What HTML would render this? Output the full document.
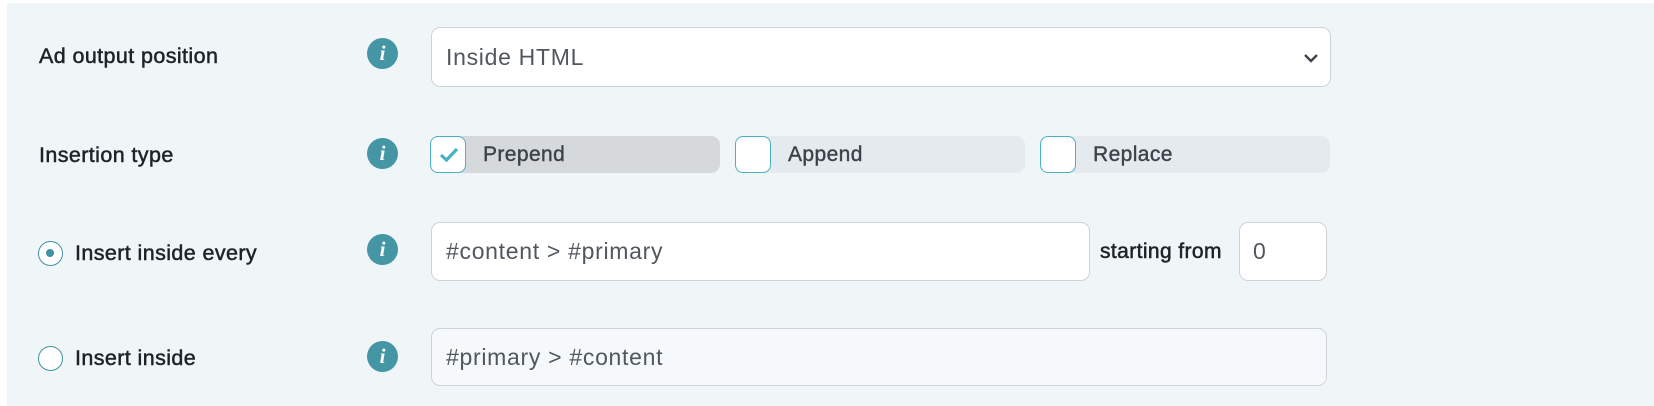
<!DOCTYPE html>
<html><head><meta charset="utf-8"><style>
*{box-sizing:border-box;margin:0;padding:0}
body{width:1654px;height:406px;background:#fff;font-family:"Liberation Sans",sans-serif;position:relative;overflow:hidden}
.panel{position:absolute;left:7px;top:3px;right:0;bottom:0;background:#f0f5f8}
.abs{position:absolute}
.lbl{position:absolute;font-size:21.5px;letter-spacing:0.4px;color:#1d2327;line-height:24px;-webkit-text-stroke:0.5px #1d2327;white-space:nowrap}
.info{position:absolute;width:31px;height:31px;border-radius:50%;background:#4496a4;color:#fff;font-family:"Liberation Serif",serif;font-style:italic;font-weight:bold;font-size:21px;line-height:31px;text-align:center}
.box{position:absolute;background:#fff;border:1px solid #cdd3d9;border-radius:9px;font-size:23px;letter-spacing:0.7px;color:#50575e;padding-left:14px;display:flex;align-items:center;white-space:nowrap}
.pill{position:absolute;top:136px;height:37px;width:290px;border-radius:9px;background:#e5eaee}
.pill .cb{position:absolute;left:0;top:0;width:36px;height:37px;background:#fff;border:1px solid #4ab0c4;border-radius:8px}
.pill span{position:absolute;left:53px;top:0;line-height:37px;font-size:21px;letter-spacing:0.4px;color:#3c434a;-webkit-text-stroke:0.4px #3c434a}
.radio{position:absolute;width:25px;height:25px;border-radius:50%;border:1.5px solid #3f93a3;background:#fff}
</style></head><body>
<div class="panel"></div>

<div class="lbl" style="left:39px;top:44px">Ad output position</div>
<div class="info" style="left:367px;top:38px">i</div>
<div class="box" style="left:431px;top:27px;width:900px;height:60px">Inside HTML
<svg class="abs" style="left:871px;top:24px" width="16" height="12" viewBox="0 0 16 12"><path d="M2 3 L8 9 L14 3" fill="none" stroke="#3c434a" stroke-width="2.4"/></svg></div>

<div class="lbl" style="left:39px;top:143px">Insertion type</div>
<div class="info" style="left:367px;top:138px">i</div>
<div class="pill" style="left:430px;background:#d5d9db"><div class="cb"><svg class="abs" style="left:8px;top:10px" width="20" height="16" viewBox="0 0 20 16"><path d="M2 8 L7.5 13 L18 2" fill="none" stroke="#4ab0c4" stroke-width="3.2"/></svg></div><span>Prepend</span></div>
<div class="pill" style="left:735px"><div class="cb"></div><span>Append</span></div>
<div class="pill" style="left:1040px"><div class="cb"></div><span>Replace</span></div>

<div class="radio" style="left:38px;top:241px"><div class="abs" style="left:7px;top:7px;width:8px;height:8px;border-radius:50%;background:#3f93a3"></div></div>
<div class="lbl" style="left:75px;top:241px">Insert inside every</div>
<div class="info" style="left:367px;top:234px">i</div>
<div class="box" style="left:431px;top:222px;width:659px;height:59px">#content &gt; #primary</div>
<div class="lbl" style="left:1100px;top:240px;font-size:21px;letter-spacing:0.4px">starting from</div>
<div class="box" style="left:1239px;top:222px;width:88px;height:59px;padding-left:13px">0</div>

<div class="radio" style="left:38px;top:346px"></div>
<div class="lbl" style="left:75px;top:346px">Insert inside</div>
<div class="info" style="left:367px;top:341px">i</div>
<div class="box" style="left:431px;top:328px;width:896px;height:58px;background:#f6f9fb">#primary &gt; #content</div>
</body></html>
